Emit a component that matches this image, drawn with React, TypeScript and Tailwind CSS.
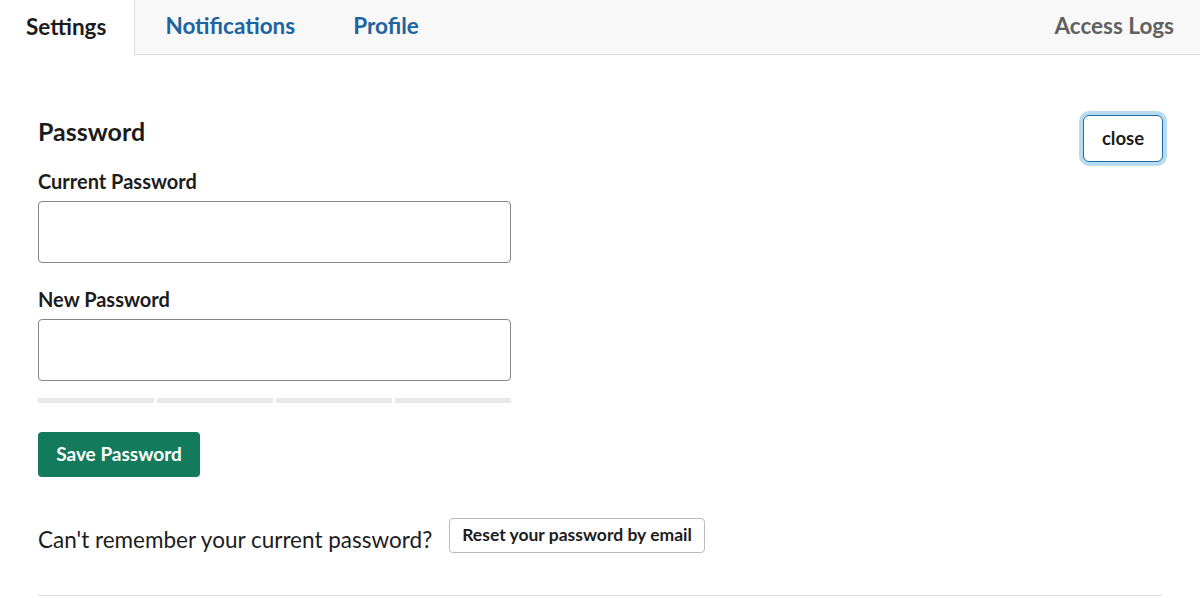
export default function App() {
  return (
    <div className="min-h-screen bg-white font-['Lato','Liberation_Sans',sans-serif] text-[#1d1c1d]">
      {/* Tabs */}
      <div className="flex h-[55px] items-stretch border-b border-[#dddddd] bg-[#f8f8f8]">
        <div className="-mb-px flex items-center border-r border-[#dddddd] bg-white pb-[2px] pl-[26px] pr-[28px] text-[22.5px] font-bold">
          Settings
        </div>
        <div className="flex items-center pb-[2px] pl-[30px] text-[22.5px] font-bold text-[#1d64a0]">
          Notifications
        </div>
        <div className="flex items-center pb-[2px] pl-[58px] text-[22.5px] font-bold text-[#1d64a0]">
          Profile
        </div>
        <div className="ml-auto flex items-center pb-[2px] pr-[26px] text-[22.5px] font-bold text-[#616061]">
          Access Logs
        </div>
      </div>

      {/* Content */}
      <div className="px-[38px] pt-[58px]">
        <div className="flex items-start justify-between">
          <div className="w-[473px]">
            <h2 className="text-[25px] font-bold leading-[36px]">Password</h2>
            <label className="mt-[18px] block text-[20px] font-bold leading-[28px]">Current Password</label>
            <input
              type="password"
              className="mt-[6px] block h-[62px] w-full rounded-[4px] border border-[#868686] px-3 outline-none"
            />
            <label className="mt-[22px] block text-[20px] font-bold leading-[28px]">New Password</label>
            <input
              type="password"
              className="mt-[6px] block h-[62px] w-full rounded-[4px] border border-[#868686] px-3 outline-none"
            />
            <div className="mt-[17px] grid grid-cols-4 gap-[3px]">
              <div className="h-[5px] bg-[#e8e8e8]" />
              <div className="h-[5px] bg-[#e8e8e8]" />
              <div className="h-[5px] bg-[#e8e8e8]" />
              <div className="h-[5px] bg-[#e8e8e8]" />
            </div>
            <button className="mt-[29px] flex h-[45px] w-[162px] items-center justify-center rounded-[4px] bg-[#137b5b] text-[19px] font-bold text-white">
              Save Password
            </button>
          </div>
          <button className="mr-[-1px] mt-[2px] flex h-[47px] w-[80px] items-center justify-center rounded-[6px] border border-[#1d6ca8] bg-white text-[18.5px] font-bold shadow-[0_0_0_4px_#b7dbf1]">
            close
          </button>
        </div>

        <div className="mt-[41px] flex h-[35px] items-start">
          <span className="mt-[7px] text-[22.5px] leading-[30px]">Can't remember your current password?</span>
          <button className="ml-[17px] flex h-[35px] items-center rounded-[4px] border border-[#bbbbbb] px-[12px] text-[17.5px] font-bold">
            Reset your password by email
          </button>
        </div>

        <div className="mt-[42px] border-t border-[#dddddd]" />
      </div>
    </div>
  );
}
